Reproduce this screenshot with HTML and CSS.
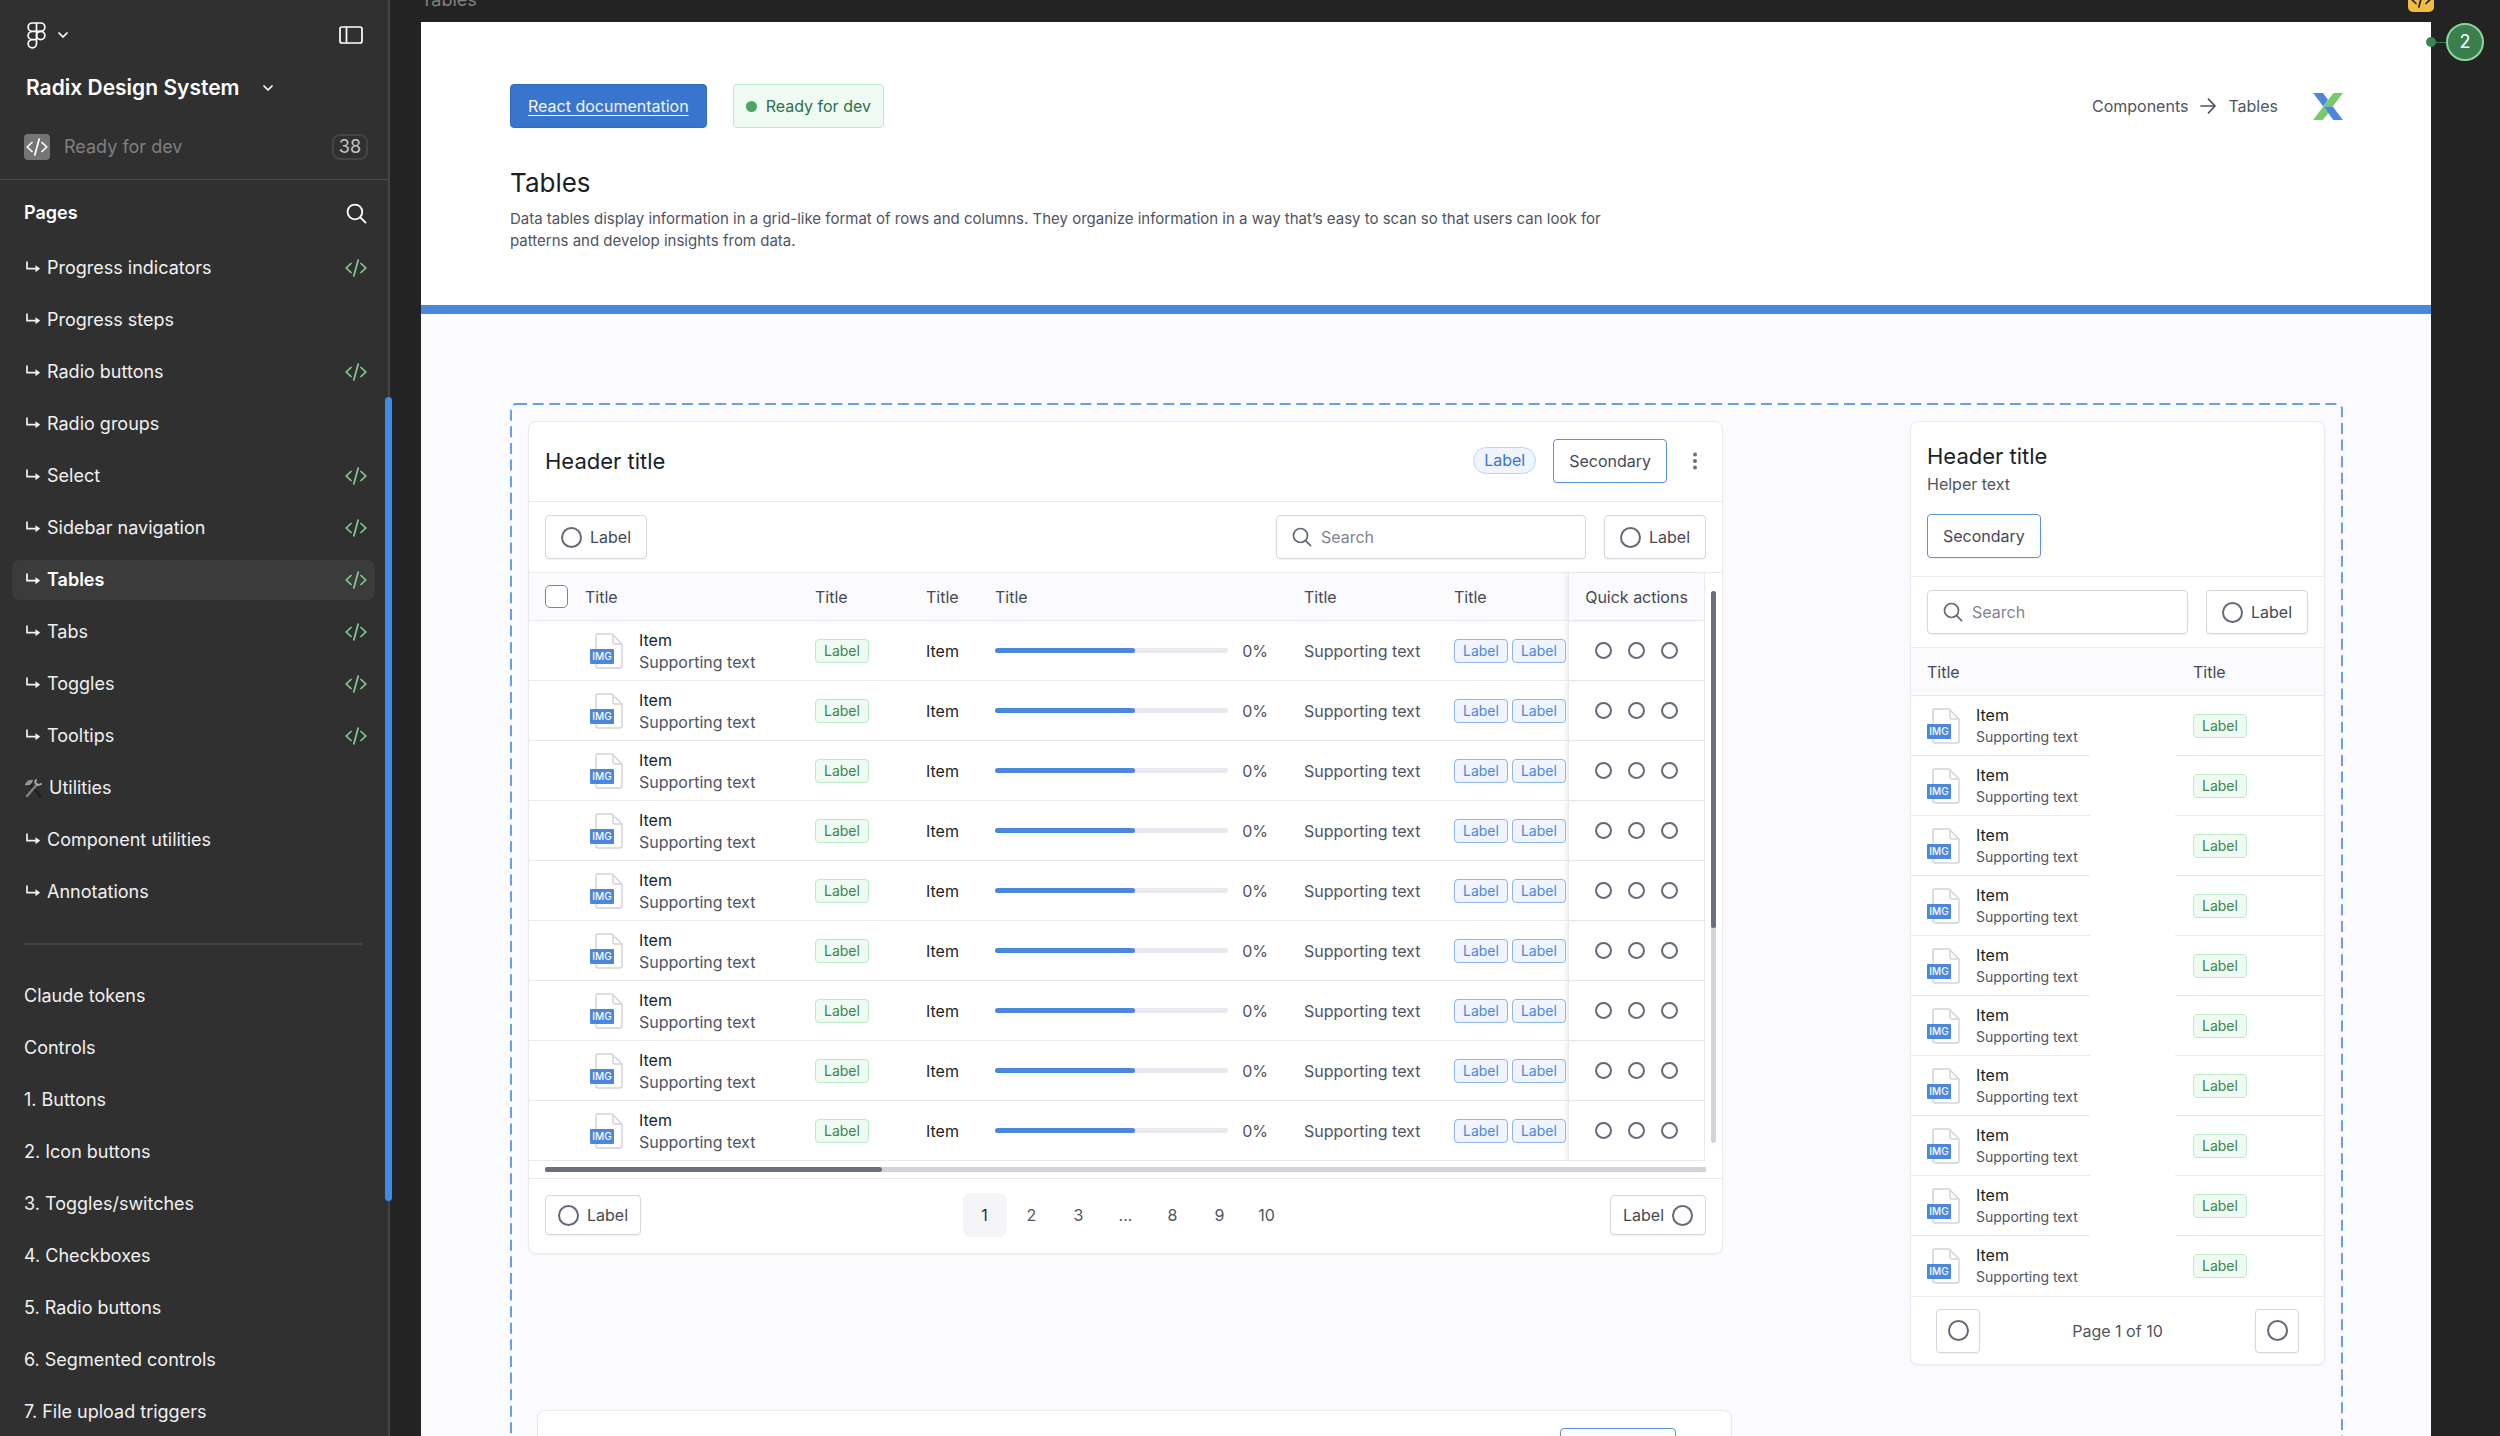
FILE: index.html
```html
<!DOCTYPE html>
<html lang="en">
  <head>
    <meta charset="UTF-8" />
    <meta name="viewport" content="width=device-width, initial-scale=1.0" />
    <title>Radix Design System</title>
    <link rel="stylesheet" href="styles.css">
  </head>

  <body>
    <!-- Shared icons -->
    <svg class="sprite" aria-hidden="true">
      <symbol id="i-code" viewBox="0 0 22 18">
        <path d="M6 4.5 1.2 9 6 13.5M16 4.5 20.8 9 16 13.5M13.2 1 8.8 17" />
      </symbol>
      <symbol id="i-sub" viewBox="0 0 16 16">
        <path d="M3 1.5v7.2h9" fill="none" stroke="currentColor" stroke-width="1.7" />
        <path d="M11.5 5.2 16.2 8.7 11.5 12.2z" fill="currentColor" />
      </symbol>
      <symbol id="i-chevron" viewBox="0 0 10 6">
        <path d="M1 1l4 4 4-4" />
      </symbol>
      <symbol id="i-search" viewBox="0 0 20 20">
        <circle cx="8.5" cy="8.5" r="7" />
        <path d="M13.6 13.6l5 5" />
      </symbol>
      <symbol id="i-file" viewBox="0 0 36 36">
        <path
          d="M8 1h14l10 10v21.500a2.500 2.500 0 0 1-2.500 2.500H8.500a2.500 2.500 0 0 1-2.500-2.500V3a2 2 0 0 1 2-2z"
          fill="#fff" stroke="#d3d4d9" stroke-width="1.500" />
        <path d="M23 1.500v7.500a2 2 0 0 0 2 2h7" fill="none" stroke="#d3d4d9" stroke-width="1.500" />
        <rect x="0" y="16" width="24" height="15" rx="1" fill="#4b87dc" />
        <text x="12" y="27" text-anchor="middle" class="file-text">IMG</text>
      </symbol>
    </svg>

    <!-- Sidebar -->
    <aside class="sidebar">
      <div class="file-head">
        <div class="bar">
          <button class="plain" aria-label="Main menu">
            <svg width="19" height="27" viewBox="0 0 19 27" class="line">
              <path d="M9.500 1H5.300a4.150 4.150 0 0 0 0 8.300h4.200zM9.500 1h4.200a4.150 4.150 0 0 1 0 8.300H9.500zM9.500 9.300H5.300a4.150 4.150 0 0 0 0 8.300h4.200zM9.500 17.600H5.300a4.150 4.150 0 1 0 4.200 4.150z" />
              <circle cx="13.700" cy="13.450" r="4.150" />
            </svg>
            <svg width="10" height="6" class="line"><use href="#i-chevron" /></svg>
          </button>
          <button class="plain" aria-label="Toggle panel">
            <svg width="24" height="18" viewBox="0 0 24 18" class="line">
              <rect x="1" y="1" width="22" height="16" rx="2" />
              <path d="M7.500 1v16" />
            </svg>
          </button>
        </div>
        <button class="plain file-name">
          Radix Design System
          <svg width="10" height="6" class="line"><use href="#i-chevron" /></svg>
        </button>
        <div class="bar dev">
          <span class="dev-icon">
            <svg width="22" height="18" class="line"><use href="#i-code" /></svg>
          </span>
          Ready for dev
          <span class="count">38</span>
        </div>
      </div>

      <div class="bar pages-head">
        <h2>Pages</h2>
        <button class="plain" aria-label="Search pages">
          <svg width="21" height="21" class="line"><use href="#i-search" /></svg>
        </button>
      </div>
      <nav id="pages" class="pages"></nav>
      <div class="sidebar-thumb"></div>
    </aside>

    <!-- Canvas -->
    <main class="canvas">
      <span class="board-name">Tables</span>
      <span class="board-badge">
        <svg width="22" height="18" class="line"><use href="#i-code" /></svg>
      </span>
      <div class="note">
        <span class="note-dot"></span>
        <span class="note-count">2</span>
      </div>

      <div class="board">
        <header class="board-head">
          <div class="board-links">
            <a href="#" class="doc-link">React documentation</a>
            <span class="status">Ready for dev</span>
            <div class="crumbs">
              <span>Components</span>
              <svg width="16" height="16" viewBox="0 0 16 16" class="line">
                <path d="M1 8h14M8.500 1.200 15 8l-6.500 6.800" />
              </svg>
              <span>Tables</span>
              <svg class="logo" width="30" height="27" viewBox="0 0 88 80">
                <path d="M0 0h29l15 20-14 20z" fill="#4b87dc" />
                <path d="M60 0h28L58 40H30z" fill="#7ac86c" />
                <path d="M30 40h28l30 40H60L45 60z" fill="#4b87dc" />
                <path d="M30 40l15 20-17 20H0z" fill="#7ac86c" />
              </svg>
            </div>
          </div>
          <h1>Tables</h1>
          <p>
            Data tables display information in a grid-like format of rows and
            columns. They organize information in a way that’s easy to scan so
            that users can look for patterns and develop insights from data.
          </p>
        </header>

        <div class="board-body">
        <section class="frame">
          <svg class="frame-line" aria-hidden="true">
            <rect x="1" y="1" rx="5" />
          </svg>

          <div class="column">
            <!-- Desktop table -->
            <article class="card">
              <div class="card-head">
                <h3>Header title</h3>
                <span class="pill">Label</span>
                <button class="btn secondary">Secondary</button>
                <button class="plain more" aria-label="More">
                  <svg width="6" height="18" viewBox="0 0 6 18" fill="#6a6f7d">
                    <circle cx="3" cy="2.500" r="2" /><circle cx="3" cy="9" r="2" /><circle cx="3" cy="15.500" r="2" />
                  </svg>
                </button>
              </div>
              <div class="toolbar">
                <button class="btn"><i class="ring"></i>Label</button>
                <label class="search push">
                  <svg width="20" height="20" class="line"><use href="#i-search" /></svg>
                  <input type="search" placeholder="Search" aria-label="Search" />
                </label>
                <button class="btn"><i class="ring"></i>Label</button>
              </div>
              <div class="table-area">
                <table class="wide">
                  <thead>
                    <tr>
                      <th class="c-name">
                        <div class="th-name">
                          <input type="checkbox" id="all" class="check" />
                          <label for="all">Title</label>
                        </div>
                      </th>
                      <th class="c-tag">Title</th>
                      <th class="c-item">Title</th>
                      <th>Title</th>
                      <th class="c-text">Title</th>
                      <th class="c-tags">Title</th>
                      <th class="c-actions">Quick actions</th>
                    </tr>
                  </thead>
                  <tbody id="wide-rows"></tbody>
                </table>
                <div class="v-scroll"><div class="v-thumb"></div></div>
              </div>
              <div class="h-scroll"><div class="h-thumb"></div></div>
              <div class="card-foot">
                <button class="btn small"><i class="ring"></i>Label</button>
                <div class="pager">
                  <button class="page current">1</button>
                  <button class="page">2</button>
                  <button class="page">3</button>
                  <span class="page">...</span>
                  <button class="page">8</button>
                  <button class="page">9</button>
                  <button class="page">10</button>
                </div>
                <button class="btn small">Label<i class="ring"></i></button>
              </div>
            </article>

            <article class="card next">
              <div class="card-head">
                <button class="btn secondary" aria-label="Secondary"></button>
              </div>
            </article>
          </div>

          <!-- Mobile table -->
          <article class="card">
            <div class="card-head stacked">
              <h3>Header title</h3>
              <p>Helper text</p>
              <button class="btn secondary">Secondary</button>
            </div>
            <div class="toolbar">
              <label class="search fill">
                <svg width="20" height="20" class="line"><use href="#i-search" /></svg>
                <input type="search" placeholder="Search" aria-label="Search" />
              </label>
              <button class="btn"><i class="ring"></i>Label</button>
            </div>
            <table class="narrow">
              <thead>
                <tr>
                  <th class="n-name">Title</th>
                  <th></th>
                  <th class="n-tag">Title</th>
                </tr>
              </thead>
              <tbody id="narrow-rows"></tbody>
            </table>
            <div class="card-foot compact">
              <button class="btn square" aria-label="Previous page"><i class="ring"></i></button>
              <span>Page 1 of 10</span>
              <button class="btn square" aria-label="Next page"><i class="ring"></i></button>
            </div>
          </article>
        </section>
        </div>
      </div>
    </main>

    <script>
      // [name, icon before it, ready for dev]
      const pages = [
        ["Progress indicators", "sub", true],
        ["Progress steps", "sub"],
        ["Radio buttons", "sub", true],
        ["Radio groups", "sub"],
        ["Select", "sub", true],
        ["Sidebar navigation", "sub", true],
        ["Tables", "sub", true],
        ["Tabs", "sub", true],
        ["Toggles", "sub", true],
        ["Tooltips", "sub", true],
        ["Utilities", "tools"],
        ["Component utilities", "sub"],
        ["Annotations", "sub"],
        null,
        ["Claude tokens"],
        ["Controls"],
        ["1. Buttons"],
        ["2. Icon buttons"],
        ["3. Toggles/switches"],
        ["4. Checkboxes"],
        ["5. Radio buttons"],
        ["6. Segmented controls"],
        ["7. File upload triggers"],
      ];

      const icons = {
        sub: '<svg width="16" height="16"><use href="#i-sub" /></svg>',
        tools: `<svg width="18" height="20" viewBox="0 0 18 20" fill="none" stroke-linecap="round">
          <path d="M6 6l10 12" stroke="#1f2024" stroke-width="2.600" />
          <path d="M1.500 6.500C3 3 5 2 8.500 2.500L6.500 6z" fill="#8b8f99" stroke="#a3a7b0" />
          <path d="M3 18L13 6.500" stroke="#857f8c" stroke-width="2.400" />
          <path d="M12 2c-2 3 1 6.500 5 4" stroke="#a3a7b0" stroke-width="2" />
        </svg>`,
      };

      document.getElementById("pages").innerHTML = pages
        .map((page) => {
          if (!page) return "<hr />";
          const [name, icon, ready] = page;
          return `<a href="#" class="${name === "Tables" ? "active" : ""}">
            ${icons[icon] || ""}<span>${name}</span>
            ${ready ? '<svg class="line ready" width="22" height="18"><use href="#i-code" /></svg>' : ""}
          </a>`;
        })
        .join("");

      const fileCell = `<div class="file">
        <svg width="36" height="36"><use href="#i-file" /></svg>
        <div><strong>Item</strong><span>Supporting text</span></div>
      </div>`;
      const action = '<button class="plain" aria-label="Action"><i class="ring sm"></i></button>';

      document.getElementById("wide-rows").innerHTML = `<tr>
        <td>${fileCell}</td>
        <td><span class="tag green">Label</span></td>
        <td class="dark">Item</td>
        <td><div class="progress"><div class="track"><div class="done"></div></div>0%</div></td>
        <td>Supporting text</td>
        <td><div class="tags"><span class="tag">Label</span><span class="tag">Label</span></div></td>
        <td class="c-actions"><div class="actions">${action.repeat(3)}</div></td>
      </tr>`.repeat(9);

      document.getElementById("narrow-rows").innerHTML = `<tr>
        <td>${fileCell}</td>
        <td></td>
        <td class="n-tag"><span class="tag green">Label</span></td>
      </tr>`.repeat(10);
    </script>
  </body>
</html>
```
FILE: styles.css
```css
* {
  box-sizing: border-box;
}

body {
  margin: 0;
  display: flex;
  height: 100vh;
  overflow: hidden;
  background: #232323;
  font-family: Inter, sans-serif;
  font-size: 16px;
  line-height: 22px;
  color: #50545f;
}

h1,
h2,
h3,
p {
  margin: 0;
}

button,
input {
  font: inherit;
  color: inherit;
}

.sprite {
  display: none;
}

.line {
  fill: none;
  stroke: currentColor;
  stroke-width: 1.7;
  stroke-linecap: round;
  stroke-linejoin: round;
}

.plain {
  display: flex;
  align-items: center;
  padding: 0;
  border: none;
  background: none;
  cursor: pointer;
}

/* Sidebar */
.sidebar {
  position: relative;
  z-index: 1;
  flex: 0 0 390px;
  border-right: 2px solid #444;
  background: #303030;
  color: #f0f0f0;
  font-size: 18px;
}

.bar {
  display: flex;
  align-items: center;
  justify-content: space-between;
}

.file-head {
  padding: 21px 24px 18px 26px;
  border-bottom: 1px solid #4a4a4a;
}

.file-head .bar {
  height: 28px;
}

.file-head .plain {
  gap: 12px;
  margin: 0 1px;
  color: #fff;
}

.file-head .file-name {
  gap: 24px;
  height: 28px;
  margin: 25px 0 31px;
  font-size: 21px;
  font-weight: 600;
}

.file-head .dev {
  justify-content: flex-start;
  gap: 14px;
  margin: 0 -4px 0 -2px;
  color: #808080;
}

.dev-icon {
  display: flex;
  align-items: center;
  justify-content: center;
  width: 26px;
  height: 26px;
  border-radius: 4px;
  background: #757575;
  color: #fff;
}

.count {
  margin-left: auto;
  width: 36px;
  height: 26px;
  border: 2px solid #444;
  border-radius: 8px;
  text-align: center;
  color: #c4c4c4;
}

.pages-head {
  padding: 18px 21px 20px 24px;
  height: 68px;
  color: #fff;
}

.pages-head h2 {
  font-size: 18px;
  font-weight: 600;
}

.pages {
  display: flex;
  flex-direction: column;
  gap: 12px;
  padding: 0 13px 0 12px;
}

.pages a {
  display: flex;
  align-items: center;
  gap: 7px;
  height: 40px;
  padding: 0 8px 0 12px;
  border-radius: 8px;
  color: inherit;
  text-decoration: none;
}

.pages a.active {
  background: #3b3b3b;
  color: #fff;
  font-weight: 600;
}

.pages .ready {
  margin-left: auto;
  color: #83cf94;
}

.pages hr {
  flex-shrink: 0;
  width: 338px;
  height: 2px;
  margin: 19px 12px;
  border: none;
  background: #444;
}

.sidebar-thumb {
  position: absolute;
  top: 397px;
  right: -4px;
  width: 7px;
  height: 56%;
  border-radius: 4px;
  background: #3f8ae6;
}

/* Canvas */
.canvas {
  position: relative;
  flex: 1;
  min-width: 0;
  padding: 22px 69px 0 31px;
  overflow: hidden;
}

.board-name {
  position: absolute;
  top: -11px;
  left: 31px;
  font-size: 18px;
  color: #808080;
}

.board-badge {
  position: absolute;
  top: -14px;
  right: 66px;
  display: flex;
  align-items: center;
  justify-content: center;
  width: 26px;
  height: 26px;
  border-radius: 5px;
  background: #edbd45;
  color: #232323;
}

.note {
  position: absolute;
  top: 23px;
  right: 16px;
  display: flex;
  align-items: center;
}

.note-dot {
  width: 10px;
  height: 10px;
  border-radius: 50%;
  background: #3c8550;
}

.note::before {
  content: "";
  order: 1;
  width: 10px;
  border-top: 1px dashed #3c8550;
}

.note-count {
  order: 2;
  width: 38px;
  height: 38px;
  border: 2px solid #8cd79d;
  border-radius: 50%;
  background: #3c7f4e;
  color: #fff;
  font-size: 18px;
  line-height: 34px;
  text-align: center;
}

.board {
  background: #fbfbfe;
}

.board-head {
  padding: 62px 88px 53px 89px;
  border-bottom: 9px solid #4b87dc;
  background: #fff;
}

.board-links {
  display: flex;
  align-items: center;
  gap: 26px;
}

.doc-link,
.status {
  display: flex;
  align-items: center;
  height: 44px;
  border: 1px solid #2f69bd;
  border-radius: 4px;
}

.doc-link {
  padding: 0 17px;
  background: #3a75cd;
  color: #f2f6fd;
  text-underline-offset: 3px;
}

.status {
  gap: 9px;
  padding: 0 12px;
  border-color: #bcebca;
  background: #effaf3;
  color: #2c7145;
}

.status::before {
  content: "";
  width: 11px;
  height: 11px;
  border-radius: 50%;
  background: #4da565;
}

.crumbs {
  display: flex;
  align-items: center;
  gap: 12px;
  margin-left: auto;
}

.crumbs .logo {
  margin-left: 23px;
}

.board-head h1 {
  margin: 37px 0 7px;
  font-size: 26px;
  line-height: 36px;
  font-weight: 400;
  color: #1b1f27;
}

.board-head p {
  max-width: 1120px;
  font-size: 15px;
}

.board-body {
  padding: 89px 88px 88px 89px;
}

/* Frame with the table variants */
.frame {
  position: relative;
  display: grid;
  grid-template-columns: minmax(0, 1195fr) minmax(0, 415fr);
  align-items: start;
  column-gap: 187px;
  padding: 18px;
}

.frame-line {
  position: absolute;
  top: 0;
  left: 0;
  width: 100%;
  height: 100%;
}

.frame-line rect {
  width: calc(100% - 2px);
  height: calc(100% - 2px);
  fill: none;
  stroke: #6a9ee8;
  stroke-width: 2;
  stroke-dasharray: 11 5.6;
}

.card {
  position: relative;
  border: 1px solid #e9e9ef;
  border-radius: 8px;
  background: #fff;
  box-shadow: 0 1px 2px rgba(30, 30, 60, 0.06);
}

.card.next {
  margin: 156px -9px 0 9px;
}

.card-head {
  display: flex;
  align-items: center;
  height: 80px;
  padding: 0 16px 2px;
  border-bottom: 1px solid #e9e9ef;
}

.card.next .card-head {
  justify-content: flex-end;
  padding-right: 55px;
  border-bottom: none;
}

.card.next .btn {
  width: 116px;
}

.card-head h3 {
  margin-right: auto;
  font-size: 22px;
  line-height: 28px;
  font-weight: 400;
  color: #1b1f27;
}

.pill {
  height: 27px;
  margin-right: 17px;
  padding: 0 10px;
  border: 1px solid #bcd2f6;
  border-radius: 14px;
  background: #eff4fe;
  line-height: 25px;
  color: #3a75cd;
}

.more {
  margin-left: 25px;
  padding-right: 8px;
}

.card-head.stacked {
  flex-direction: column;
  align-items: flex-start;
  height: auto;
  padding: 20px 16px 18px;
}

.stacked p {
  margin: 3px 0 19px;
}

.toolbar {
  display: flex;
  align-items: center;
  gap: 18px;
  padding: 13px 16px;
  border-bottom: 1px solid #e9e9ef;
}

.btn {
  display: flex;
  align-items: center;
  justify-content: center;
  gap: 8px;
  height: 44px;
  padding: 0 15px;
  border: 1px solid #d6d7dc;
  border-radius: 4px;
  background: #fff;
  box-shadow: 0 1px 1px rgba(30, 30, 60, 0.06);
  color: #454953;
  cursor: pointer;
}

.btn.secondary {
  border-color: #5c93e0;
}

.btn.small {
  height: 40px;
  padding: 0 12px;
}

.btn.square {
  width: 44px;
  padding: 0;
}

.ring {
  width: 21px;
  height: 21px;
  border: 2px solid #646978;
  border-radius: 50%;
}

.ring.sm {
  width: 17px;
  height: 17px;
}

.search {
  display: flex;
  align-items: center;
  gap: 9px;
  width: 310px;
  height: 44px;
  padding: 0 15px;
  border: 1px solid #d6d7dc;
  border-radius: 4px;
  box-shadow: 0 1px 1px rgba(30, 30, 60, 0.06);
  color: #646978;
}

.search.push {
  margin-left: auto;
}

.search.fill {
  flex: 1;
  min-width: 0;
}

.search input {
  flex: 1;
  min-width: 0;
  padding: 0;
  border: none;
  outline: none;
  background: none;
}

.search input::placeholder {
  color: #7f838f;
}

/* Tables */
.table-area {
  display: flex;
}

table {
  width: 100%;
  table-layout: fixed;
  border-spacing: 0;
}

th,
td {
  height: 60px;
  padding: 0;
  border-bottom: 1px solid #e9e9ef;
  text-align: left;
}

th {
  height: 48px;
  background: #fbfbfe;
  font-weight: 400;
  color: #454953;
}

td.dark {
  color: #1b1f27;
}

td:first-child .file {
  padding-left: 61px;
}

.wide {
  border-right: 1px solid #e9e9ef;
}

.c-name {
  width: 286px;
}

.c-tag {
  width: 111px;
}

.c-item {
  width: 69px;
}

.c-text {
  width: 150px;
}

.c-tags {
  width: 114px;
}

.c-actions {
  width: 136px;
  border-left: 1px solid #e9e9ef;
  box-shadow: -3px 0 4px -1px rgba(30, 30, 60, 0.08);
  text-align: center;
}

.th-name {
  display: flex;
  align-items: center;
  gap: 17px;
  padding-left: 16px;
}

.check {
  appearance: none;
  width: 23px;
  height: 23px;
  margin: 0;
  border: 1px solid #7f838f;
  border-radius: 5px;
  background: #fff;
}

.file {
  display: flex;
  align-items: center;
  gap: 13px;
}

.file strong,
.file span {
  display: block;
}

.file strong {
  font-weight: 400;
  color: #1b1f27;
}

.file-text {
  font-family: Inter, sans-serif;
  font-size: 10px;
  font-weight: 500;
  fill: #fff;
}

.tag {
  display: inline-block;
  height: 24px;
  padding: 0 8px;
  border: 1px solid #8fb4f0;
  border-radius: 4px;
  background: #eff4fe;
  font-size: 14px;
  line-height: 22px;
  color: #4b87dc;
}

.tag.green {
  border-color: #bcebca;
  background: #effaf3;
  color: #3c8550;
}

.tags {
  display: flex;
  gap: 4px;
}

.progress {
  display: flex;
  align-items: center;
  gap: 14px;
  padding-right: 36px;
}

.track {
  flex: 1;
  height: 5px;
  border-radius: 3px;
  background: #e8e8ee;
}

.done {
  width: 60%;
  height: 5px;
  border-radius: 3px;
  background: #4b87dc;
}

.actions {
  display: flex;
  justify-content: center;
  gap: 16px;
}

.v-scroll {
  flex: 0 0 5px;
  margin: 18px 6px;
  border-radius: 3px;
  background: #d3d4d9;
}

.v-thumb {
  height: 61%;
  border-radius: 3px;
  background: #6a6f7a;
}

.h-scroll {
  height: 18px;
  padding: 6px 16px;
  border-bottom: 1px solid #e9e9ef;
  background: linear-gradient(#d3d4d9, #d3d4d9) content-box no-repeat;
}

.h-thumb {
  width: 29%;
  height: 5px;
  border-radius: 3px;
  background: #6a6f7a;
}

.card-foot {
  display: flex;
  align-items: center;
  justify-content: space-between;
  height: 74px;
  padding: 0 16px 2px;
}

.pager {
  display: flex;
  gap: 3px;
}

.page {
  width: 44px;
  height: 44px;
  padding: 0;
  border: none;
  border-radius: 8px;
  background: none;
  line-height: 44px;
  text-align: center;
}

.page.current {
  background: #f4f4f9;
  color: #2d313a;
}

.narrow td:first-child .file {
  padding-left: 16px;
}

.narrow .file span {
  font-size: 14px;
}

.narrow th:first-child {
  padding-left: 16px;
}

.narrow td:nth-child(2) {
  border-bottom: none;
}

.n-name {
  width: 179px;
}

.narrow .n-tag {
  width: 149px;
  padding-left: 18px;
}

.narrow tbody tr:last-child td {
  border-bottom: none;
}

.card-foot.compact {
  height: 68px;
  padding: 0 25px;
  border-top: 1px solid #e9e9ef;
}
```
